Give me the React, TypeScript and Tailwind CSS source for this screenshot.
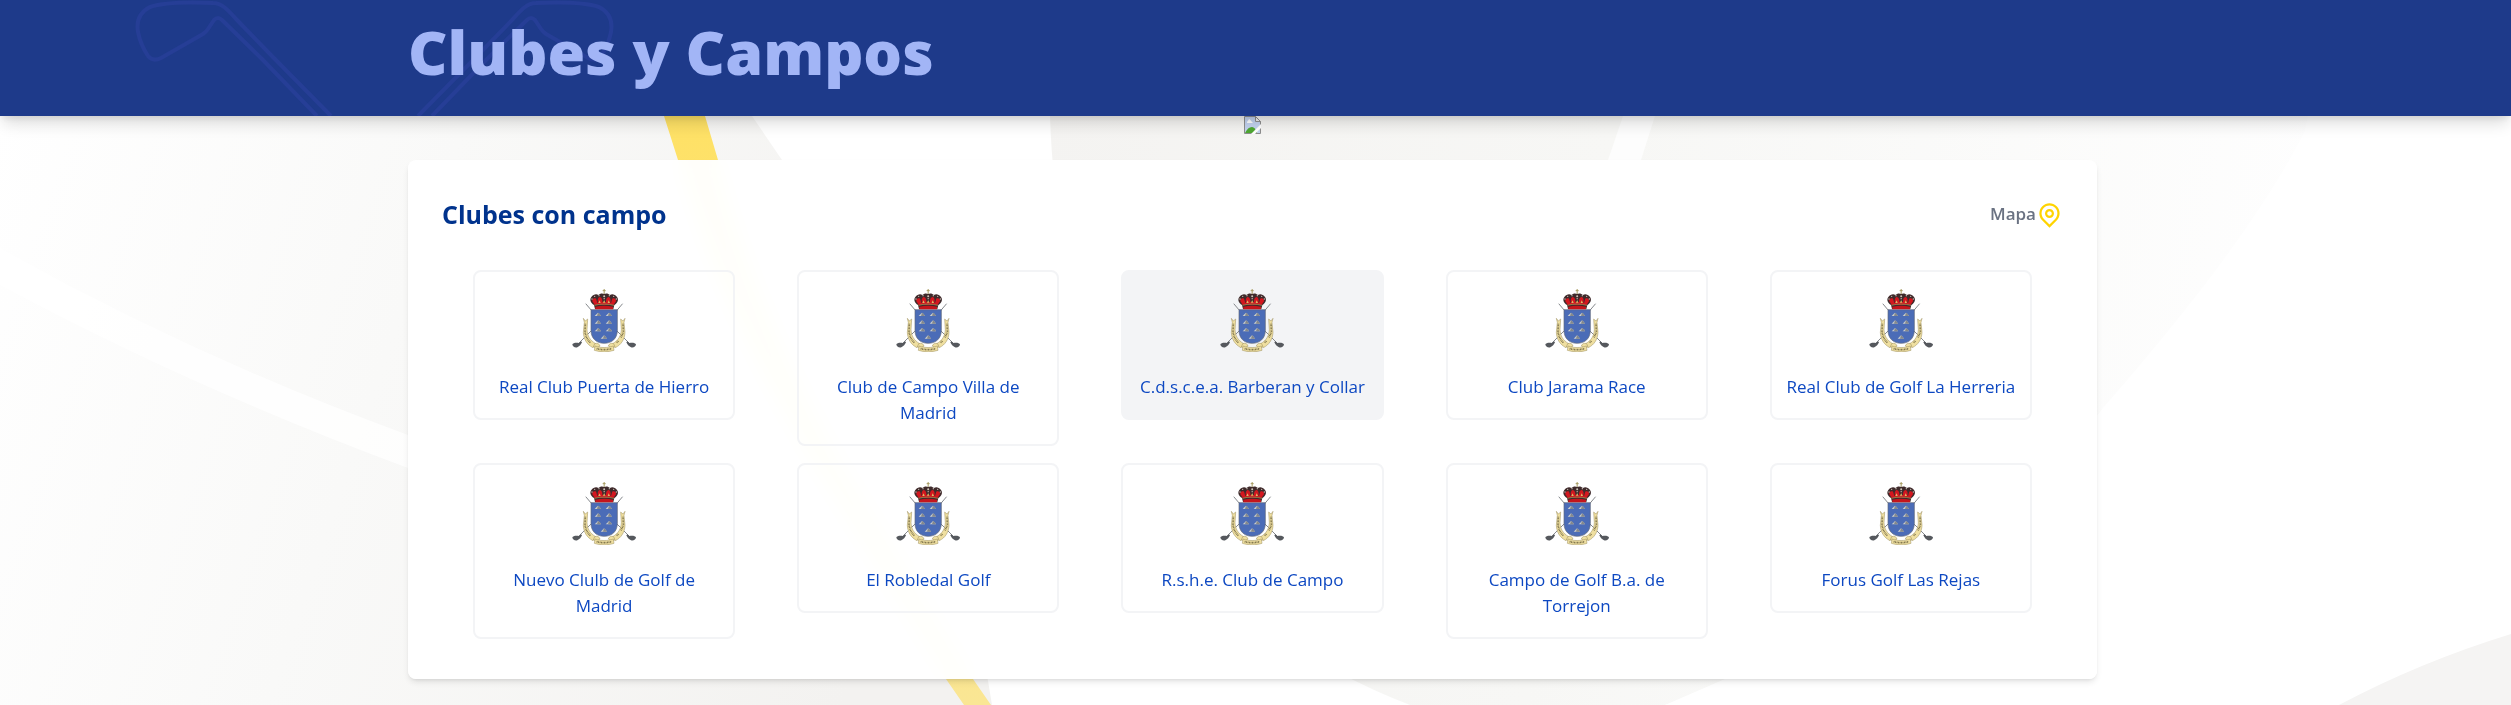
import React from "react";
import { RiMapPinLine } from "react-icons/ri";

type Club = { name: string; active?: boolean };

const clubs: Club[] = [
  { name: "Real Club Puerta de Hierro" },
  { name: "Club de Campo Villa de Madrid" },
  { name: "C.d.s.c.e.a. Barberan y Collar", active: true },
  { name: "Club Jarama Race" },
  { name: "Real Club de Golf La Herreria" },
  { name: "Nuevo Clulb de Golf de Madrid" },
  { name: "El Robledal Golf" },
  { name: "R.s.h.e. Club de Campo" },
  { name: "Campo de Golf B.a. de Torrejon" },
  { name: "Forus Golf Las Rejas" },
];

const hills: [number, number][] = [
  [115, 119], [148, 119], [115, 142], [148, 142], [115, 165], [148, 165], [133, 187],
];

function Crest() {
  return (
    <svg viewBox="37 39 192 192" className="size-16" aria-hidden="true">
      {/* golf clubs */}
      <g stroke="#85888c" strokeWidth="3" strokeLinecap="round" fill="none">
        <path d="M79 87 L96 107 M170 166 L208 204" />
        <path d="M188 87 L171 107 M96 166 L58 204" />
      </g>
      <g fill="#55585d">
        <path d="M64 199 L58 204 C50 202 40 203 38 208 C38 215 46 219 53 217 C60 214 64 208 67 202 Z" />
        <path d="M203 199 L209 204 C217 202 227 203 229 208 C229 215 221 219 214 217 C207 214 203 208 200 202 Z" />
      </g>
      {/* ribbon */}
      <g fill="#efdfa0" stroke="#9b8d5a" strokeWidth="1.5" strokeLinejoin="round">
        <path d="M71 130 L77 138 L84 132 L82 164 C83 183 91 196 108 206 L100 218 C82 209 72 193 71 172 L74 142 Z" />
        <path d="M196 130 L190 138 L183 132 L185 164 C184 183 176 196 159 206 L167 218 C185 209 195 193 196 172 L193 142 Z" />
        <path d="M105 206 C113 203 119 206 121 213 L112 219 L101 216 Z" />
        <path d="M162 206 C154 203 148 206 146 213 L155 219 L166 216 Z" />
        <path d="M106 213 C124 219 143 219 161 213 L163 226 C144 232 123 232 104 226 Z" />
      </g>
      <g fill="none" stroke="#6f6540" strokeWidth="5">
        <path d="M77 146 L76 170 C78 184 83 194 92 203" strokeDasharray="2.5 2" />
        <path d="M190 146 L191 170 C189 178 187 182 184 187 M176 198 L171 203" strokeDasharray="2.5 2" />
        <path d="M111 221 C126 225 141 225 156 221" strokeDasharray="2.5 2" />
      </g>
      {/* shield */}
      <path
        d="M94 104 H173 V166 C173 190 157 205 133.500 205 C110 205 94 190 94 166 Z"
        fill="#4b6cb7"
        stroke="#5f6678"
        strokeWidth="2"
      />
      {hills.map(([x, y]) => (
        <g key={`${x}-${y}`}>
          <path d={`M${x - 10} ${y + 4} L${x - 5} ${y - 1} L${x} ${y - 6} L${x + 5} ${y - 2} L${x + 9} ${y + 4} Z`} fill="#c9cccb" />
          <path d={`M${x} ${y - 6} L${x + 5} ${y - 2} L${x + 9} ${y + 4} H${x - 3} Z`} fill="#84888b" />
        </g>
      ))}
      {/* crown */}
      <path d="M133.500 42 V57 M129 47 H138" stroke="#a79c62" strokeWidth="3" />
      <path
        d="M106 102 L103 90 C93 84 89 74 95 66 C101 58 110 56 116 60 C121 55 128 54 133.500 57 C139 54 146 55 151 60 C157 56 166 58 172 66 C178 74 174 84 164 90 L161 102 Z"
        fill="#3f2a2b"
      />
      <g fill="#d3171f">
        <path d="M98 79 C97 72 102 68 108 70 C111 73 111 81 114 87 L105 89 Z" />
        <path d="M116 86 C112 76 115 68 120 66 C127 67 129 76 128 85 Z" />
        <path d="M151 86 C155 76 152 68 147 66 C140 67 138 76 139 85 Z" />
        <path d="M169 79 C170 72 165 68 159 70 C156 73 156 81 153 87 L162 89 Z" />
        <path d="M104 86 C123 79 144 79 163 86 L162 90 H105 Z" />
      </g>
      <g fill="#cfc6bb">
        <circle cx="97" cy="72" r="2" />
        <circle cx="105" cy="64" r="2" />
        <circle cx="118" cy="62" r="2" />
        <circle cx="133.500" cy="64" r="3" />
        <circle cx="133.500" cy="71" r="2" />
        <circle cx="149" cy="62" r="2" />
        <circle cx="162" cy="64" r="2" />
        <circle cx="170" cy="72" r="2" />
      </g>
      <g fill="#dfbc66">
        <path d="M116 84 L120 76 L123 84 Z M130 83 L133.500 75 L137 83 Z M144 84 L147 76 L151 84 Z" />
      </g>
      <path d="M104 91 C122 86 145 86 163 91" fill="none" stroke="#8c7c4d" strokeWidth="3" />
      <path d="M107 95 C124 91 143 91 160 95 L160 103 H107 Z" fill="#c4151c" />
    </svg>
  );
}

function MissingImage() {
  return (
    <svg viewBox="0 0 17 18" className="h-[18px] w-[17px]" role="img" aria-label="Imagen no disponible">
      <path d="M0.500 0.500 H11.500 L16.500 5.500 V17.500 H0.500 Z" fill="#c3d3f0" stroke="#8e8e8e" />
      <path d="M11.500 0.500 V5.500 H16.500 Z" fill="#efefef" stroke="#8e8e8e" />
      <path d="M3 7 C3 5 4 5 5 3 C7 4 7 5 9 7 Z" fill="#fff" />
      <path d="M1 17 C3 13 5 11 8 11 C10 11 12 13 13 17 Z" fill="#4fa832" />
      <path d="M17 8 L7 18 H11 L17 12 Z" fill="#fff" />
    </svg>
  );
}

function Backdrop() {
  return (
    <svg
      viewBox="0 0 2511 705"
      preserveAspectRatio="xMidYMid slice"
      className="absolute inset-0 -z-10 h-full w-full"
      aria-hidden="true"
    >
      <defs>
        <linearGradient id="leftFade" gradientUnits="userSpaceOnUse" x1="0" y1="100" x2="940" y2="420">
          <stop offset="0" stopColor="#ffffff" />
          <stop offset="0.450" stopColor="#f9f9f8" />
          <stop offset="1" stopColor="#f3f2f0" />
        </linearGradient>
        <linearGradient id="rightFade" gradientUnits="userSpaceOnUse" x1="1050" y1="0" x2="2320" y2="200">
          <stop offset="0" stopColor="#f4f3f1" />
          <stop offset="0.450" stopColor="#f7f7f5" />
          <stop offset="1" stopColor="#fefefe" />
        </linearGradient>
        <linearGradient id="stripe" x1="0" y1="0" x2="0" y2="1">
          <stop offset="0" stopColor="#ffe05c" />
          <stop offset="1" stopColor="#fae694" />
        </linearGradient>
      </defs>
      <rect width="2511" height="705" fill="#ffffff" />
      <path d="M0 0 H690 L752 116 L782 160 C810 215 850 280 920 460 Q975 590 992 705 H0 Z" fill="url(#leftFade)" />
      <path d="M0 248 Q190 355 408 435 Q560 490 720 520 V553 Q550 522 408 468 Q190 387 0 285 Z" fill="#ffffff" fillOpacity="0.750" />
      <path d="M635 0 L664 116 L678 160 C705 260 740 340 810 460 L946 679 L964 705 H991 L973 679 L840 460 C775 340 740 250 718 160 L705 116 L678 0 Z" fill="url(#stripe)" />
      <path d="M1050 0 V116 C1055 280 1110 470 1190 560 Q1290 660 1410 705 H1665 C1860 650 2000 560 2103 408 C2180 320 2260 220 2305 131 L2330 0 Z" fill="url(#rightFade)" />
      <path d="M1660 0 L1623 116 L1608 160 L1540 330 H1580 L1641 160 L1655 116 L1690 0 Z" fill="#ffffff" fillOpacity="0.750" />
      <path d="M1725 679 L1665 705 H2140 L2110 400 Q1960 590 1725 679 Z" fill="#ffffff" />
      <path d="M2339 705 Q2420 662 2511 634 V705 Z" fill="#f5f4f3" />
    </svg>
  );
}

function CrossedClubs() {
  const head =
    "M331 116 L268 52 L237 20 C228 10 222 3 213 3 C190 2 165 2 150 7 C140 12 136 20 138 32 C140 42 144 50 148 56 Q153 62 161 58 L203 34 Q206 32 208 29 L214 20 Q218 16 222 20 L262 59 L317 116";
  return (
    <svg
      viewBox="0 0 750 116"
      className="absolute top-0 left-0 h-full w-[750px]"
      fill="none"
      stroke="#263e96"
      strokeWidth="4"
      strokeLinejoin="round"
      aria-hidden="true"
    >
      <path d={head} />
      <path d={head} transform="matrix(-1 0 0 1 749 0)" />
    </svg>
  );
}

export default function App() {
  return (
    <div className="relative isolate min-h-screen overflow-hidden font-['Open_Sans','Noto_Sans',sans-serif]">
      <Backdrop />

      <header className="relative bg-[#1e3a8a] pr-[6px] shadow-[0_10px_15px_-3px_rgba(0,0,0,0.14),0_4px_6px_-2px_rgba(0,0,0,0.08)]">
        <CrossedClubs />
        <div className="relative mx-auto h-[116px] w-full max-w-[1689px] pt-2">
          <h1 className="font-['Noto_Sans','Open_Sans',sans-serif] text-[61px] leading-[88px] font-black text-[#a2b5f6]">
            Clubes y Campos
          </h1>
        </div>
      </header>

      <main className="pr-[6px] pb-[26px]">
        <div className="mb-[26px] flex justify-center">
          <MissingImage />
        </div>

        <section className="mx-auto w-full max-w-[1689px] rounded-lg bg-white/97 px-[34px] pt-9 pb-10 shadow-md backdrop-blur-sm">
          <div className="flex h-9 items-center justify-between">
            <h2 className="text-[25px] leading-9 font-bold text-[#00338d]">Clubes con campo</h2>
            <a href="#mapa" className="flex items-center text-[17px] font-semibold text-gray-500">
              Mapa
              <RiMapPinLine className="size-[27px] text-[#ffd400]" aria-hidden="true" />
            </a>
          </div>

          <ul className="mt-[38px] grid grid-cols-5 items-start gap-y-[17px]">
            {clubs.map((club) => (
              <li key={club.name} className="px-[31px]">
                <a
                  href="#club"
                  className={`flex flex-col items-center gap-[22px] rounded-lg border-2 border-gray-100 px-3 pt-4 pb-[18px] text-center text-[17px] leading-[26px] text-[#0d48c2] ${
                    club.active ? "bg-gray-100" : ""
                  }`}
                >
                  <Crest />
                  <span>{club.name}</span>
                </a>
              </li>
            ))}
          </ul>
        </section>
      </main>
    </div>
  );
}
